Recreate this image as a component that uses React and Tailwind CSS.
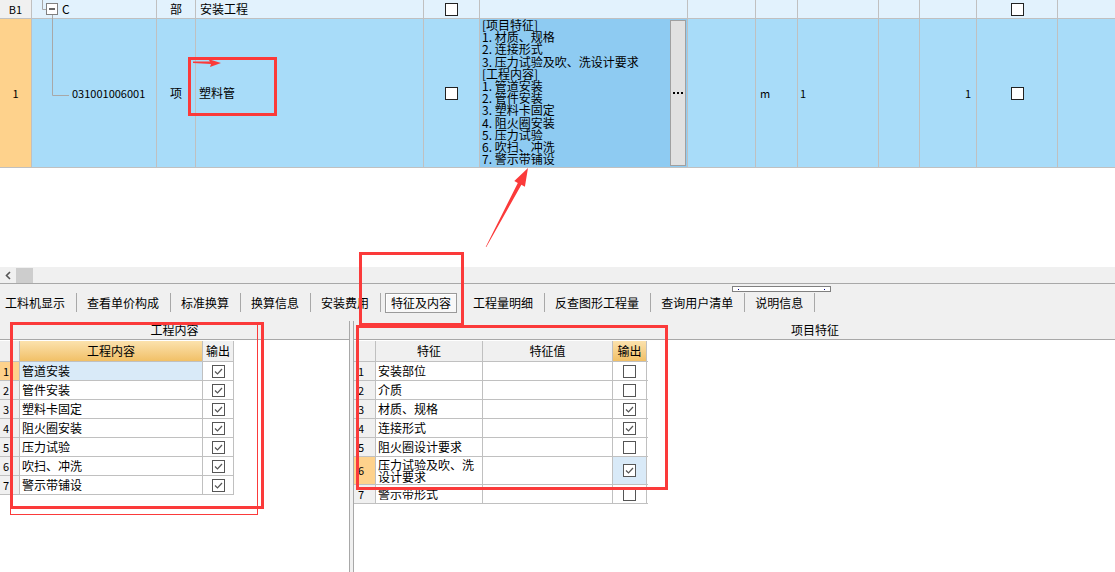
import React from "react";

const FEAT_LINES = [
  "[项目特征]",
  "1. 材质、规格",
  "2. 连接形式",
  "3. 压力试验及吹、洗设计要求",
  "[工程内容]",
  "1. 管道安装",
  "2. 管件安装",
  "3. 塑料卡固定",
  "4. 阻火圈安装",
  "5. 压力试验",
  "6. 吹扫、冲洗",
  "7. 警示带铺设",
];

const TABS = [
  { label: "工料机显示" },
  { label: "查看单价构成" },
  { label: "标准换算" },
  { label: "换算信息" },
  { label: "安装费用" },
  { label: "特征及内容", active: true },
  { label: "工程量明细" },
  { label: "反查图形工程量" },
  { label: "查询用户清单" },
  { label: "说明信息" },
];

const CONTENT_ROWS = ["管道安装", "管件安装", "塑料卡固定", "阻火圈安装", "压力试验", "吹扫、冲洗", "警示带铺设"];

const FEATURE_ROWS = [
  { name: "安装部位", checked: false },
  { name: "介质", checked: false },
  { name: "材质、规格", checked: true },
  { name: "连接形式", checked: true },
  { name: "阻火圈设计要求", checked: false },
  { name: "压力试验及吹、洗设计要求", checked: true, tall: true, selected: true },
  { name: "警示带形式", checked: false },
];

function GridBox() {
  return <div className="w-[13px] h-[13px] border border-[#222] bg-white" />;
}

function CheckBox({ checked }) {
  return (
    <div className="w-[13px] h-[13px] border border-[#555] bg-white">
      {checked && (
        <svg width="11" height="11" viewBox="0 0 11 11">
          <path d="M2 5.5 L4.5 8 L9 3" fill="none" stroke="#555" strokeWidth="1.2" />
        </svg>
      )}
    </div>
  );
}

export default function App() {
  return (
    <div className="relative w-[1115px] h-[572px] overflow-hidden bg-white text-black text-[12px] font-['Noto_Sans_CJK_SC',sans-serif]">
      {/* top grid header row */}
      <div className="flex h-[19px] border-b border-[#c0c0c0] bg-[#e2f2fd] leading-[18px]">
        <div className="w-[32px] border-r border-[#c0c0c0] bg-[#f0f0f0] text-center text-[11px]">B1</div>
        <div className="relative w-[125px] border-r border-[#c0c0c0] pl-[30px]">
          <svg className="absolute left-0 top-0" width="125" height="19">
            <path d="M10.5 0 V9.5 H14" stroke="#a8a8a8" fill="none" />
            <rect x="14.5" y="3.5" width="11" height="11" fill="#fff" stroke="#808080" />
            <path d="M17 9 H23" stroke="#000" strokeWidth="1.2" />
            <path d="M20.5 15 V19" stroke="#a8a8a8" />
          </svg>
          <span className="relative">C</span>
        </div>
        <div className="w-[39px] border-r border-[#c0c0c0] text-center">部</div>
        <div className="w-[228px] border-r border-[#c0c0c0] pl-[4px]">安装工程</div>
        <div className="w-[56px] border-r border-[#c0c0c0] flex items-center justify-center">
          <GridBox />
        </div>
        <div className="w-[208px] border-r border-[#c0c0c0]" />
        <div className="w-[68px] border-r border-[#c0c0c0]" />
        <div className="w-[42px] border-r border-[#c0c0c0]" />
        <div className="w-[81px] border-r border-[#c0c0c0]" />
        <div className="w-[41px] border-r border-[#c0c0c0]" />
        <div className="w-[57px] border-r border-[#c0c0c0]" />
        <div className="w-[81px] border-r border-[#c0c0c0] flex items-center justify-center">
          <GridBox />
        </div>
        <div className="flex-1" />
      </div>

      {/* top grid row 1 */}
      <div className="flex h-[149px] border-b border-[#c0c0c0] bg-[#a8dcf9]">
        <div className="w-[32px] border-r border-[#c0c0c0] bg-[#fed28c] flex items-center justify-center text-[11px]">1</div>
        <div className="relative w-[125px] border-r border-[#c0c0c0] flex items-center pl-[40px] text-[11px]">
          <svg className="absolute left-0 top-0" width="125" height="148">
            <path d="M20.5 0 V76.5 H37" stroke="#a8a8a8" fill="none" />
          </svg>
          <span className="relative">031001006001</span>
        </div>
        <div className="w-[39px] border-r border-[#c0c0c0] flex items-center justify-center">项</div>
        <div className="w-[228px] border-r border-[#c0c0c0] flex items-center pl-[3px]">塑料管</div>
        <div className="w-[56px] border-r border-[#c0c0c0] flex items-center justify-center">
          <GridBox />
        </div>
        <div className="w-[208px] border-r border-[#c0c0c0] bg-[#8ecbf2] flex">
          <div className="flex-1 overflow-hidden pl-[2px] leading-[12.2px] whitespace-nowrap">
            {FEAT_LINES.map((line, i) => (
              <div key={i}>{line}</div>
            ))}
          </div>
          <div className="w-[16px] my-[1px] mr-[1px] border border-[#a0a0a0] bg-[#e1e1e1] flex items-center justify-center">
            <svg width="10" height="3" viewBox="0 0 10 3">
              <rect x="0" y="0" width="2" height="2" fill="#000" />
              <rect x="4" y="0" width="2" height="2" fill="#000" />
              <rect x="8" y="0" width="2" height="2" fill="#000" />
            </svg>
          </div>
        </div>
        <div className="w-[68px] border-r border-[#c0c0c0]" />
        <div className="w-[42px] border-r border-[#c0c0c0] flex items-center pl-[4px] text-[11px]">m</div>
        <div className="w-[81px] border-r border-[#c0c0c0] flex items-center pl-[2px] text-[11px]">1</div>
        <div className="w-[41px] border-r border-[#c0c0c0]" />
        <div className="w-[57px] border-r border-[#c0c0c0] flex items-center justify-end pr-[5px] text-[11px]">1</div>
        <div className="w-[81px] border-r border-[#c0c0c0] flex items-center justify-center">
          <GridBox />
        </div>
        <div className="flex-1" />
      </div>

      <div className="h-[99px]" />

      {/* horizontal scrollbar */}
      <div className="flex items-center h-[17px] bg-[#f0f0f0] border-b border-[#a8a8a8]">
        <svg className="ml-[5px]" width="6" height="9" viewBox="0 0 6 9">
          <path d="M5 1 L1.5 4.5 L5 8" fill="none" stroke="#555" strokeWidth="1.6" />
        </svg>
        <div className="ml-[5px] w-[17px] h-[15px] bg-[#cdcdcd]" />
      </div>

      {/* tab toolbar */}
      <div className="relative flex items-center h-[37px] bg-[#f0f0f0] pl-[5px] text-[12px]">
        {TABS.map((tab) => (
          <React.Fragment key={tab.label}>
            {tab.active ? (
              <span className="-mx-[6px] px-[5px] leading-[18px] border border-[#9a9a9a] bg-[#f8f8f8] shadow-[inset_1px_1px_0_#ffffff]">
                {tab.label}
              </span>
            ) : (
              <span className="leading-[18px]">{tab.label}</span>
            )}
            <div className="ml-[11px] mr-[10px] w-px h-[19px] bg-[#a8a8a8]" />
          </React.Fragment>
        ))}
        {/* splitter grip */}
        <div className="absolute left-[732px] top-[2px] w-[99px] h-[6px] border border-[#808080] bg-white flex items-center justify-between px-[5px]">
          <div className="w-px h-px bg-[#000080]" />
          <div className="w-px h-px bg-[#000080]" />
        </div>
      </div>

      {/* lower panels */}
      <div className="flex h-[251px]">
        <div className="w-[350px] border-r border-[#a8a8a8] flex flex-col">
          <div className="h-[19px] bg-[#f0f0f0] border-b border-[#a8a8a8] text-center leading-[17px]">工程内容</div>
          <div className="flex-1 pt-[1px]">
            <div className="w-[234px]">
              <div className="flex h-[21px] border-b border-[#c0c0c0] leading-[20px]">
                <div className="w-[20px] border-r border-[#c0c0c0] bg-[#f0f0f0]" />
                <div className="w-[183px] border-r border-[#c0c0c0] bg-gradient-to-b from-[#fbe2ad] to-[#f1c066] text-center">工程内容</div>
                <div className="w-[31px] border-r border-[#c0c0c0] bg-[#f0f0f0] text-center">输出</div>
              </div>
              {CONTENT_ROWS.map((name, i) => (
                <div key={name} className="flex h-[19px] border-b border-[#c0c0c0] leading-[18px]">
                  <div className={`w-[20px] border-r border-[#c0c0c0] pl-[3px] text-[11px] ${i === 0 ? "bg-[#fed28c]" : "bg-[#f0f0f0]"}`}>
                    {i + 1}
                  </div>
                  <div className={`w-[183px] border-r border-[#c0c0c0] pl-[2px] ${i === 0 ? "bg-[#d9eaf8]" : "bg-white"}`}>{name}</div>
                  <div className="w-[31px] border-r border-[#c0c0c0] flex items-center justify-center">
                    <CheckBox checked />
                  </div>
                </div>
              ))}
            </div>
          </div>
        </div>

        <div className="w-[3px] bg-[#f0f0f0]" />

        <div className="flex-1 border-l border-[#a8a8a8] flex flex-col">
          <div className="h-[19px] bg-[#f0f0f0] border-b border-[#a8a8a8] pl-[437px] leading-[17px]">项目特征</div>
          <div className="flex-1 pt-[1px]">
            <div className="w-[294px]">
              <div className="flex h-[21px] border-b border-[#c0c0c0] leading-[20px]">
                <div className="w-[22px] border-r border-[#c0c0c0] bg-[#f0f0f0]" />
                <div className="w-[107px] border-r border-[#c0c0c0] bg-[#f0f0f0] text-center">特征</div>
                <div className="w-[130px] border-r border-[#c0c0c0] bg-[#f0f0f0] text-center">特征值</div>
                <div className="w-[34px] border-r border-[#c0c0c0] bg-gradient-to-b from-[#fbe2ad] to-[#f1c066] text-center">输出</div>
              </div>
              {FEATURE_ROWS.map((row, i) => (
                <div key={row.name} className={`flex border-b border-[#c0c0c0] ${row.tall ? "h-[28px]" : "h-[19px]"}`}>
                  <div className={`w-[22px] border-r border-[#c0c0c0] pl-[4px] text-[11px] flex items-center ${row.selected ? "bg-[#fed28c]" : "bg-[#f0f0f0]"}`}>
                    {i + 1}
                  </div>
                  <div className={`w-[107px] border-r border-[#c0c0c0] pl-[2px] ${row.tall ? "leading-[11.5px] pt-[2px]" : "leading-[18px]"}`}>
                    {row.name}
                  </div>
                  <div className="w-[130px] border-r border-[#c0c0c0]" />
                  <div className={`w-[34px] border-r border-[#c0c0c0] flex items-center justify-center ${row.selected ? "bg-[#d9eaf8]" : ""}`}>
                    <CheckBox checked={row.checked} />
                  </div>
                </div>
              ))}
            </div>
          </div>
        </div>
      </div>

      {/* red annotations drawn over the screenshot */}
      <svg className="absolute left-0 top-0 pointer-events-none" width="1115" height="572">
        <g fill="none" stroke="#fb3a3a">
          <rect x="189.5" y="58.5" width="86" height="56" strokeWidth="3" />
          <rect x="360.5" y="253.5" width="102" height="71" strokeWidth="3" />
          <rect x="11.5" y="323.5" width="251" height="184" strokeWidth="3" />
          <rect x="10.5" y="322.5" width="247" height="192" strokeWidth="1" />
          <rect x="357.5" y="326.5" width="309" height="162" strokeWidth="3" />
        </g>
        <polygon
          fill="#fb3a3a"
          points="485.7,246.9 517.8,183 514.3,181.1 528,168 524.9,186.7 521.4,184.8 486.3,247.1"
        />
        <polygon fill="#fb3a3a" points="193,61.5 210,61.5 208,59 221,63 210,67 211,64 193,63" />
      </svg>
    </div>
  );
}
